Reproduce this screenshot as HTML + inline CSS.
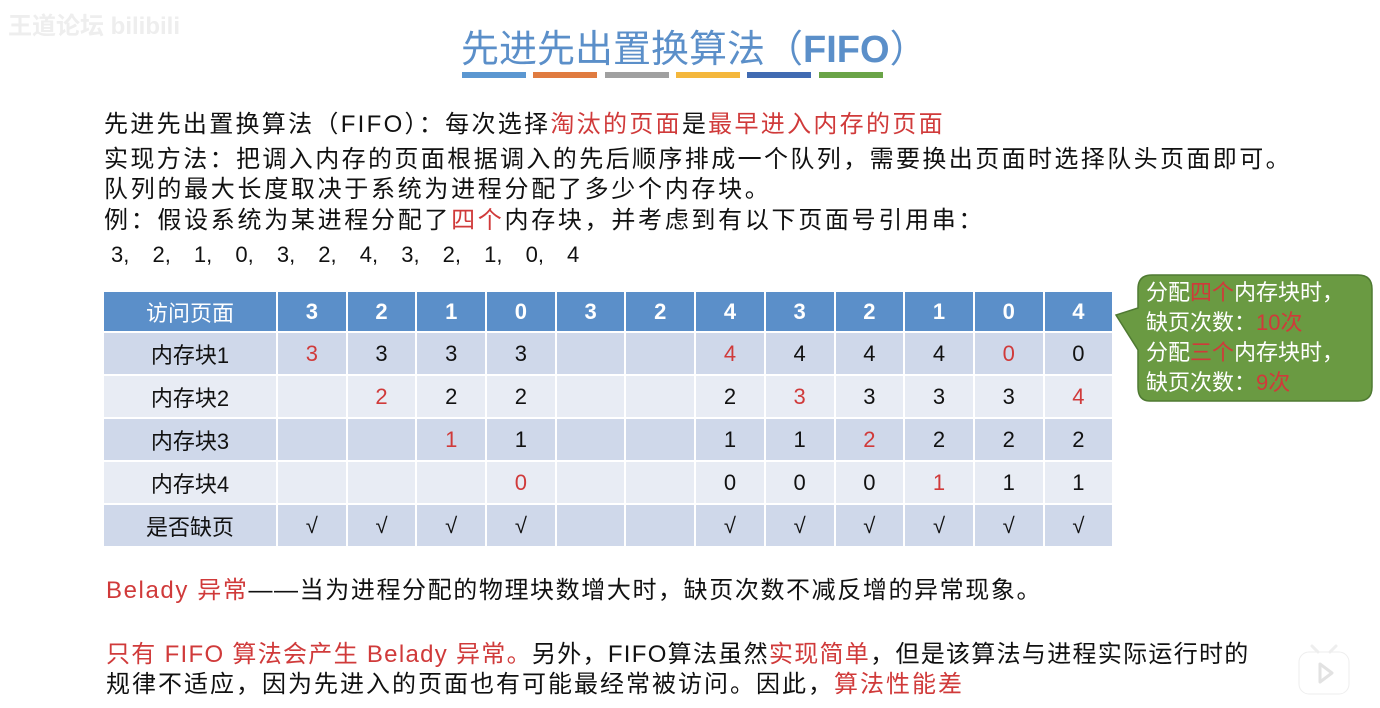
<!DOCTYPE html>
<html><head><meta charset="utf-8"><style>
body{margin:0;width:1380px;height:708px;background:#fff;position:relative;overflow:hidden;font-family:"Liberation Sans","Noto Sans CJK SC",sans-serif;color:#111}
.t{position:absolute;white-space:nowrap}
.r{color:#d03a3a}
.bar{position:absolute;top:72px;height:6px;width:64px}
table{position:absolute;left:102px;top:290px;border-collapse:collapse;table-layout:fixed}
td{border:2px solid #fff;text-align:center;font-size:22px;height:41px;padding:0}
tr.h td{background:#5b8fc9;color:#fff;font-weight:bold;height:39px}
tr.h td:first-child{font-weight:normal}
tr.a td{background:#cfd8ea}
tr.b td{background:#e8ecf4}
</style></head><body>
<div class="t" style="left:8px;top:6px;font-size:24px;color:#eee;font-weight:bold">王道论坛 bilibili</div>
<div class="t" style="left:461px;top:18px;font-size:38px;color:#5b8fc9">先进先出置换算法（<b>FIFO</b>）</div>
<div class="bar" style="left:462px;background:#5b97d1"></div>
<div class="bar" style="left:533px;background:#e07b40"></div>
<div class="bar" style="left:605px;background:#a0a0a0"></div>
<div class="bar" style="left:676px;background:#f4b73c"></div>
<div class="bar" style="left:747px;background:#416bb2"></div>
<div class="bar" style="left:819px;background:#6aa447"></div>
<div class="t" style="left:104px;top:104px;font-size:24px;letter-spacing:2.3px">先进先出置换算法（FIFO）：每次选择<span class="r">淘汰的页面</span>是<span class="r">最早进入内存的页面</span></div>
<div class="t" style="left:104px;top:139px;font-size:24px;letter-spacing:2.4px">实现方法：把调入内存的页面根据调入的先后顺序排成一个队列，需要换出页面时选择队头页面即可。</div>
<div class="t" style="left:104px;top:169px;font-size:24px;letter-spacing:2.7px">队列的最大长度取决于系统为进程分配了多少个内存块。</div>
<div class="t" style="left:104px;top:200px;font-size:24px;letter-spacing:2.7px">例：假设系统为某进程分配了<span class="r">四个</span>内存块，并考虑到有以下页面号引用串：</div>
<div class="t" style="left:111px;top:242px;font-size:22px;word-spacing:17px">3, 2, 1, 0, 3, 2, 4, 3, 2, 1, 0, 4</div>
<table>
<colgroup><col style="width:174px"><col span="12" style="width:69.7px"></colgroup>
<tr class="h"><td>访问页面</td><td>3</td><td>2</td><td>1</td><td>0</td><td>3</td><td>2</td><td>4</td><td>3</td><td>2</td><td>1</td><td>0</td><td>4</td></tr>
<tr class="a"><td>内存块1</td><td class="r">3</td><td>3</td><td>3</td><td>3</td><td></td><td></td><td class="r">4</td><td>4</td><td>4</td><td>4</td><td class="r">0</td><td>0</td></tr>
<tr class="b"><td>内存块2</td><td></td><td class="r">2</td><td>2</td><td>2</td><td></td><td></td><td>2</td><td class="r">3</td><td>3</td><td>3</td><td>3</td><td class="r">4</td></tr>
<tr class="a"><td>内存块3</td><td></td><td></td><td class="r">1</td><td>1</td><td></td><td></td><td>1</td><td>1</td><td class="r">2</td><td>2</td><td>2</td><td>2</td></tr>
<tr class="b"><td>内存块4</td><td></td><td></td><td></td><td class="r">0</td><td></td><td></td><td>0</td><td>0</td><td>0</td><td class="r">1</td><td>1</td><td>1</td></tr>
<tr class="a"><td>是否缺页</td><td>√</td><td>√</td><td>√</td><td>√</td><td></td><td></td><td>√</td><td>√</td><td>√</td><td>√</td><td>√</td><td>√</td></tr>
</table>
<svg style="position:absolute;left:1110px;top:270px" width="270" height="140">
<path d="M42 5 H248 Q262 5 262 19 V117 Q262 131 248 131 H40 Q28 131 28 117 V80 L6 45 L28 38 V19 Q28 5 42 5 Z" fill="#6a9a42" stroke="#4f7a32" stroke-width="1.5"/>
</svg>
<div class="t" style="left:1146px;top:278px;font-size:22px;color:#fff;line-height:30px">分配<span class="r">四个</span>内存块时，<br>缺页次数：<span class="r">10次</span><br>分配<span class="r">三个</span>内存块时，<br>缺页次数：<span class="r">9次</span></div>
<div class="t" style="left:106px;top:570px;font-size:24px;letter-spacing:1.6px"><span class="r">Belady 异常</span>——当为进程分配的物理块数增大时，缺页次数不减反增的异常现象。</div>
<div class="t" style="left:106px;top:634px;font-size:24px;letter-spacing:1.3px"><span class="r">只有 FIFO 算法会产生 Belady 异常。</span>另外，FIFO算法虽然<span class="r">实现简单</span>，但是该算法与进程实际运行时的</div>
<div class="t" style="left:106px;top:664px;font-size:24px;letter-spacing:2px">规律不适应，因为先进入的页面也有可能最经常被访问。因此，<span class="r">算法性能差</span></div>
<svg style="position:absolute;left:1296px;top:640px" width="60" height="60">
<rect x="3" y="12" width="50" height="42" rx="10" fill="#fff" stroke="#eee"/>
<path d="M16 6 L22 12 M40 6 L34 12" stroke="#eee" stroke-width="3" stroke-linecap="round"/>
<path d="M24 24 L36 33 L24 42 Z" fill="none" stroke="#e2e2e2" stroke-width="3" stroke-linejoin="round"/>
</svg>
</body></html>
